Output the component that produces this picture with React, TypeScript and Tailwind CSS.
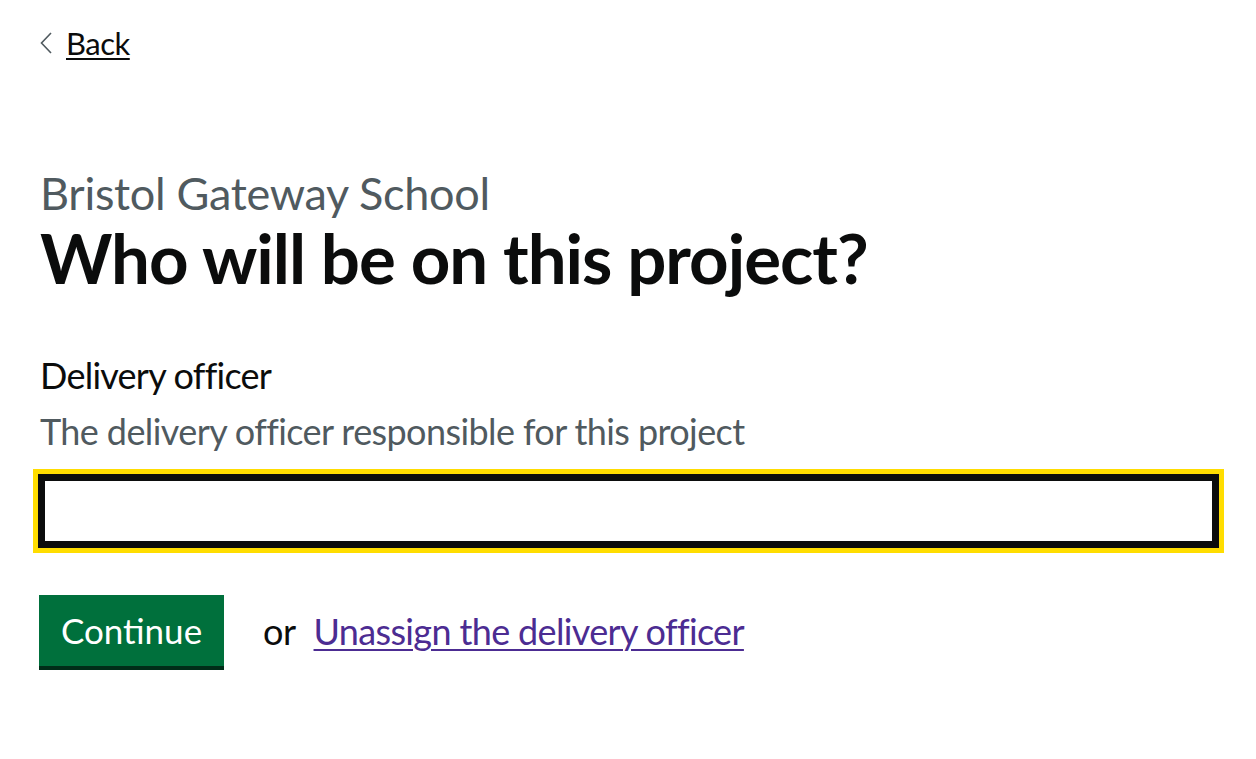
export default function App() {
  return (
    <div className="min-h-screen bg-white text-[#0b0c0c]" style={{ fontFamily: 'Lato, "Noto Sans", Arial, sans-serif' }}>
      <div className="pl-10 pr-8 pt-[25px]">
        <a href="#" className="flex items-center gap-[14px] h-9 text-[31px] leading-9 tracking-[-0.5px] text-[#0b0c0c]">
          <svg width="12" height="22" viewBox="0 0 12 22" className="shrink-0">
            <path d="M11 1 L1.5 11 L11 21" fill="none" stroke="#505a5f" strokeWidth="1.6" />
          </svg>
          <span className="underline decoration-2 underline-offset-[3px]">Back</span>
        </a>

        <div className="mt-[107px] text-[45px] leading-[50px] tracking-[-0.3px] text-[#505a5f]">Bristol Gateway School</div>
        <h1 className="text-[69px] leading-[80px] font-bold tracking-[-1px]">Who will be on this project?</h1>

        <label className="block mt-[55px] text-[36px] leading-[44px] tracking-[-0.75px]">Delivery officer</label>
        <div className="mt-3 text-[36px] leading-[44px] tracking-[-0.6px] text-[#505a5f]">
          The delivery officer responsible for this project
        </div>

        <input
          type="text"
          className="block mt-[21px] -ml-0.5 w-[1181px] h-[74px] bg-white border-[7px] border-[#0b0c0c] outline-[5px] outline-solid outline-[#ffdd00] px-3 text-[36px]"
        />

        <div className="mt-[47px] flex items-center">
          <button className="-ml-px w-[185px] h-[71px] bg-[#00703c] text-white text-[35px] leading-none shadow-[0_4px_0_#002d18]">
            Continue
          </button>
          <span className="ml-[39px] text-[36px] tracking-[-0.5px]">or</span>
          <a href="#" className="ml-[18px] text-[36px] tracking-[-0.65px] text-[#4c2c92] underline decoration-2 underline-offset-[4px]">
            Unassign the delivery officer
          </a>
        </div>
      </div>
    </div>
  )
}
